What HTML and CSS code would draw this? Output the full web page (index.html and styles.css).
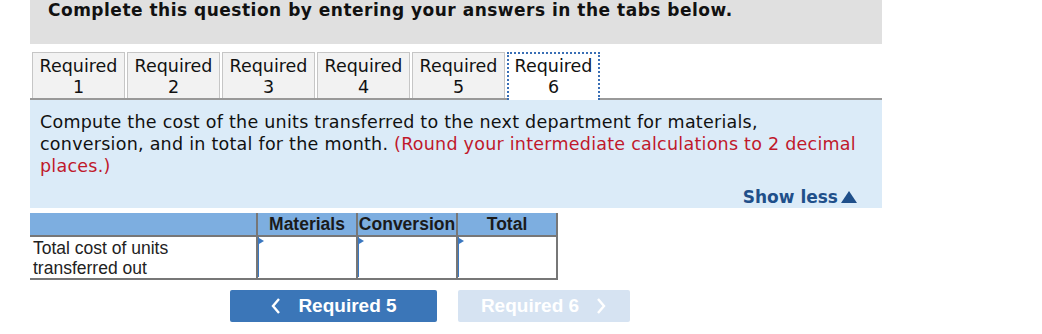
FILE: index.html
```html
<!DOCTYPE html>
<html lang="en">
<head>
    <meta charset="UTF-8">
    <meta name="viewport" content="width=device-width, initial-scale=1.0">
    <title>Required 6</title>
    <link rel="stylesheet" href="styles.css">
</head>
<body>
    <div class="page">
        <div class="banner">Complete this question by entering your answers in the tabs below.</div>

        <div class="tabs">
            <div class="tab">Required<br>1</div>
            <div class="tab">Required<br>2</div>
            <div class="tab">Required<br>3</div>
            <div class="tab">Required<br>4</div>
            <div class="tab">Required<br>5</div>
            <div class="tab active">Required<br>6</div>
        </div>

        <div class="question">
            <p>Compute the cost of the units transferred to the next department for materials, conversion, and in total for the month. <span class="hint">(Round your intermediate calculations to 2 decimal places.)</span></p>
            <div class="toggle">Show less<svg width="16" height="12" viewBox="0 0 16 12"><path d="M8 0 L16 12 L0 12 Z" fill="#1f4f8a"/></svg></div>
        </div>

        <table class="answer">
            <tr class="head">
                <th class="label"></th>
                <th>Materials</th>
                <th>Conversion</th>
                <th>Total</th>
            </tr>
            <tr>
                <td class="label">Total cost of units<br>transferred out</td>
                <td class="cell"><div class="input"></div></td>
                <td class="cell"><div class="input"></div></td>
                <td class="cell"><div class="input"></div></td>
            </tr>
        </table>

        <div class="nav">
            <button class="prev">
                <svg width="12" height="18" viewBox="0 0 12 18"><polyline points="9,2 3,9 9,16" fill="none" stroke="white" stroke-width="2.4"/></svg>
                Required 5
            </button>
            <button class="next" disabled>
                Required 6
                <svg width="12" height="18" viewBox="0 0 12 18"><polyline points="3,2 9,9 3,16" fill="none" stroke="white" stroke-width="2.4"/></svg>
            </button>
        </div>
    </div>
</body>
</html>
```

FILE: styles.css
```css
body {
    margin: 0;
    font-family: "DejaVu Sans", Verdana, sans-serif;
    color: #111;
}
.page {
    width: 852px;
    margin-left: 30px;
}
.banner {
    height: 44px;
    background-color: #e0e0e0;
    padding-left: 18px;
    font-weight: bold;
    font-size: 17px;
    letter-spacing: 0.5px;
    line-height: 21px;
    box-sizing: border-box;
}
.tabs {
    display: flex;
    gap: 2px;
    margin-top: 8px;
    padding-left: 2px;
    border-bottom: 2px solid #999;
    height: 46px;
}
.tab {
    box-sizing: border-box;
    width: 93px;
    height: 46px;
    border: 1px solid #c6c6c6;
    border-bottom: none;
    background-color: #f2f2f2;
    text-align: center;
    font-size: 17.5px;
    line-height: 21px;
    padding-top: 3px;
}
.tab.active {
    background-color: #fff;
    border: 2px dotted #3a6fb5;
    border-bottom: none;
    height: 48px;
    padding-top: 2px;
    position: relative;
    z-index: 1;
}
.question {
    background-color: #dbebf8;
    padding: 11px 25px 0 10px;
    height: 108px;
    box-sizing: border-box;
}
.question p {
    margin: 0;
    font-size: 17.5px;
    letter-spacing: 0.25px;
    line-height: 22px;
}
.hint {
    color: #c0182b;
}
.toggle {
    text-align: right;
    margin-top: 9px;
    font-weight: bold;
    font-size: 17px;
    line-height: 22px;
    color: #1f4f8a;
}
.toggle svg {
    margin-left: 3px;
    vertical-align: 0;
}
.answer {
    margin-top: 5px;
    border-collapse: collapse;
    font-family: "Liberation Sans", Arial, sans-serif;
    font-size: 17.5px;
}
.answer th {
    background-color: #7daee0;
    color: #1a1a1a;
    height: 22px;
    padding: 0;
    border: 2px solid #777;
    border-top: none;
    width: 98px;
    font-size: 17.5px;
    line-height: 21px;
}
.answer th.label {
    width: 226px;
    border-left: none;
}
.answer td {
    height: 40px;
    padding: 0;
    border: 2px solid #777;
    border-top: none;
    vertical-align: top;
}
.answer td.label {
    border-left: none;
    padding-left: 3px;
    padding-top: 1px;
    line-height: 20px;
    color: #222;
}
.answer td.cell {
    background-color: #fff;
}
.input {
    position: relative;
    height: 40px;
    border-left: 1px solid #3b78c0;
}
.input::before {
    content: "";
    position: absolute;
    top: 1px;
    left: 0;
    border-top: 3px solid transparent;
    border-bottom: 3px solid transparent;
    border-left: 5px solid #3b78c0;
}
.nav {
    display: flex;
    gap: 21px;
    margin-top: 10px;
    padding-left: 200px;
}
.nav button {
    display: flex;
    align-items: center;
    justify-content: center;
    gap: 16px;
    height: 32px;
    border: none;
    border-radius: 2px;
    color: #fff;
    font-family: "Liberation Sans", Arial, sans-serif;
    font-weight: bold;
    font-size: 19px;
}
.prev {
    width: 207px;
    background-color: #3b76b8;
}
.next {
    width: 172px;
    background-color: #d6e3f2;
}
```
